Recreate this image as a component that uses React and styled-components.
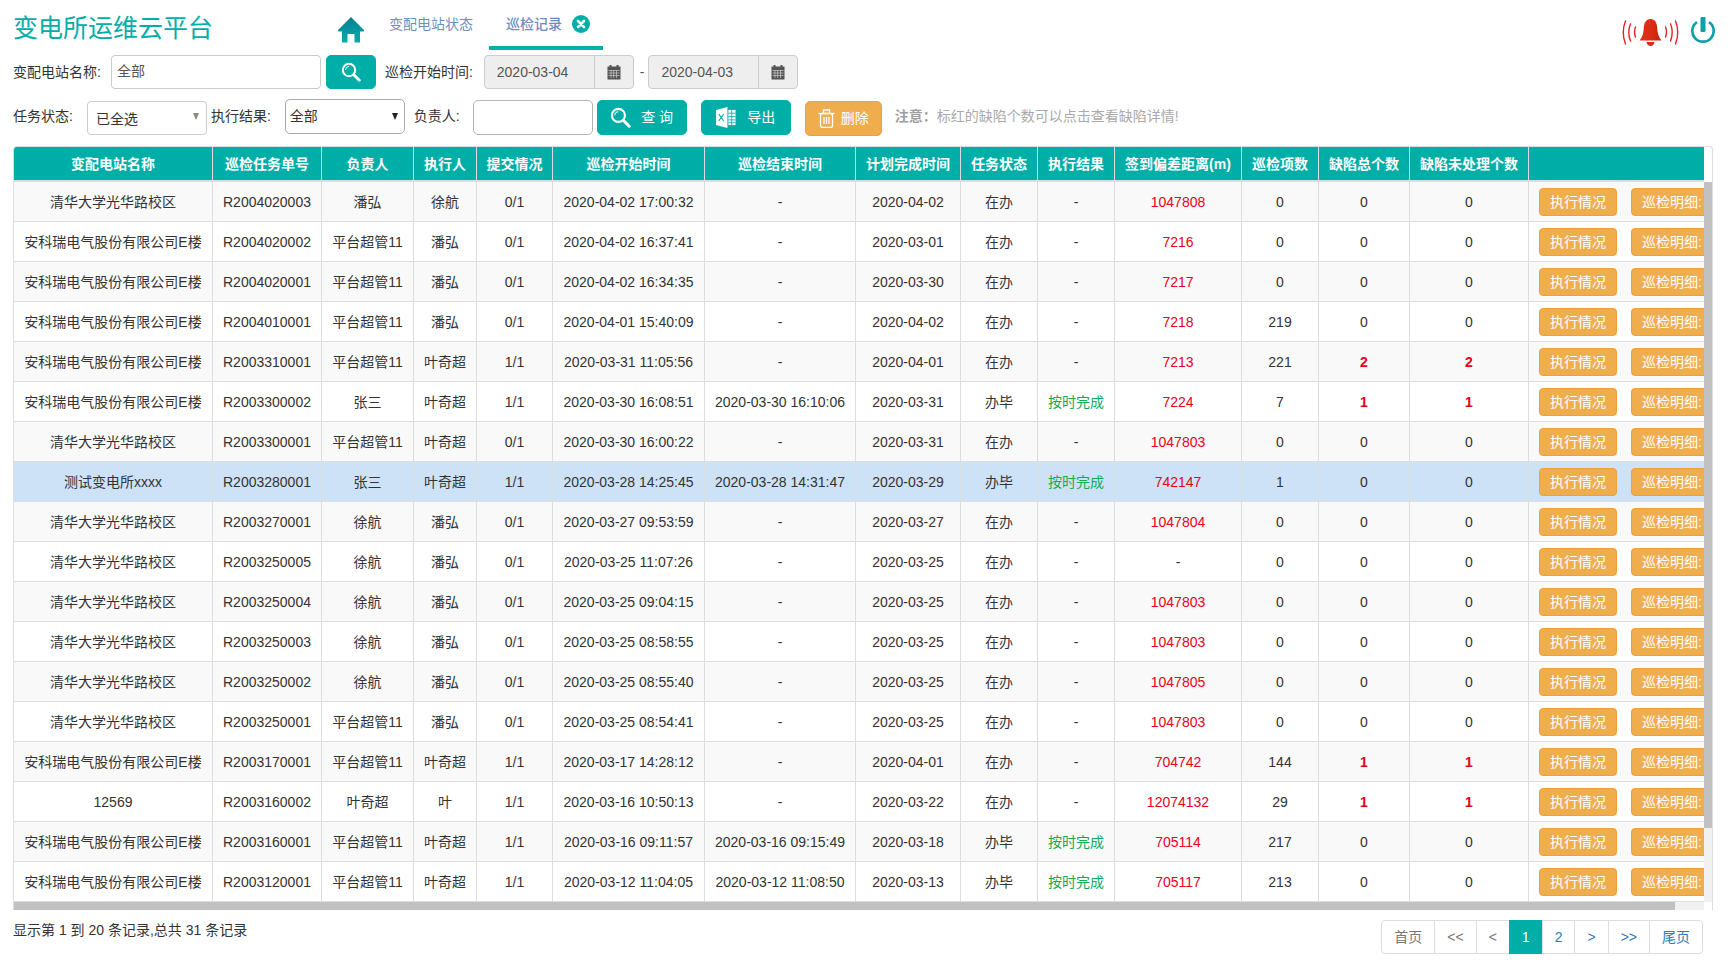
import React from 'react';
import styled, { createGlobalStyle } from 'styled-components';

const TEAL = '#00aea8';
const FONT = '"Liberation Sans", "Noto Sans CJK SC", sans-serif';

const Global = createGlobalStyle`
  html, body { margin: 0; padding: 0; background: #fff; }
  body { font-family: ${FONT}; font-size: 14px; color: #333; overflow: hidden; }
  * { box-sizing: border-box; }
`;

const Page = styled.div`
  width: 1735px;
  height: 968px;
  padding: 0 22px 0 12px;
  display: flex;
  flex-direction: column;
`;
const TopBar = styled.header`
  height: 50px;
  display: flex;
  align-items: flex-start;
  padding-left: 1px;
`;
const Title = styled.h1`
  margin: 13px 0 0;
  width: 200px;
  font-size: 25px;
  line-height: 30px;
  font-weight: 400;
  color: ${TEAL};
`;
const HomeLink = styled.a`
  display: block;
  margin: 16px 0 0 124px;
  width: 28px;
  height: 28px;
`;
const Tab = styled.a`
  height: 50px;
  margin-left: ${p => p.$ml}px;
  width: ${p => p.$w}px;
  padding-left: ${p => p.$pl}px;
  padding-top: 2px;
  display: flex;
  align-items: center;
  gap: 10px;
  line-height: 46px;
  color: #6b8fc2;
  font-weight: ${p => (p.$active ? 500 : 400)};
  border-bottom: 4px solid ${p => (p.$active ? TEAL : 'transparent')};
  white-space: nowrap;
`;
const TopIcons = styled.div`
  margin-left: auto;
  margin-top: 18px;
  margin-right: -2px;
  display: flex;
  gap: 12px;
  align-items: flex-start;
`;
const PowerWrap = styled.span`
  display: block;
  margin-top: -1px;
`;
const FilterRow = styled.div`
  height: ${p => p.$h}px;
  margin-top: ${p => p.$mt}px;
  display: flex;
  align-items: flex-start;
  padding-left: 1px;
`;
const Label = styled.label`
  line-height: 34px;
  margin-left: ${p => p.$ml || 0}px;
  white-space: nowrap;
`;
const TextField = styled.div`
  width: ${p => p.$w}px;
  height: ${p => p.$h || 34}px;
  margin-left: ${p => p.$ml}px;
  margin-top: ${p => p.$mt || 0}px;
  border: 1px solid ${p => (p.$dark ? '#b4b4b4' : '#ccc')};
  border-radius: ${p => p.$r || 4}px;
  padding-left: ${p => p.$pl || 5}px;
  line-height: 30px;
  color: #555;
  background: #fff;
`;
const SelectBox = styled.div`
  position: relative;
  width: 120px;
  height: ${p => p.$h}px;
  margin-left: ${p => p.$ml}px;
  margin-top: ${p => p.$mt}px;
  border: 1px solid ${p => (p.$dark ? '#a9a9a9' : '#ccc')};
  border-radius: ${p => (p.$dark ? 5 : 4)}px;
  padding-left: ${p => p.$pl}px;
  line-height: ${p => p.$lh}px;
  color: #333;
  &::after {
    content: '';
    position: absolute;
    right: ${p => (p.$dark ? 6 : 7)}px;
    top: ${p => (p.$dark ? 13 : 11)}px;
    border-left: 3.5px solid transparent;
    border-right: 3.5px solid transparent;
    border-top: 7px solid ${p => (p.$dark ? '#222' : '#8a8a80')};
  }
`;
const ActionButton = styled.button`
  width: ${p => p.$w}px;
  height: ${p => p.$h || 35}px;
  margin-left: ${p => p.$ml}px;
  margin-top: ${p => p.$mt || 0}px;
  border: 1px solid ${p => (p.$warn ? '#eea236' : TEAL)};
  border-radius: 5px;
  background: ${p => (p.$warn ? '#f0ad4e' : TEAL)};
  color: #fff;
  font: 14px ${FONT};
  display: flex;
  align-items: center;
  justify-content: center;
  gap: ${p => p.$gap || 0}px;
  padding: 0;
  white-space: nowrap;
`;
const ButtonText = styled.span`
  display: block;
  margin-bottom: 3px;
`;
const DateGroup = styled.div`
  width: 150px;
  height: 34px;
  margin-left: ${p => p.$ml}px;
  display: flex;
  background: #eee;
  border: 1px solid #ccc;
  border-radius: 4px;
`;
const DateText = styled.div`
  width: 110px;
  padding-left: 12px;
  line-height: 32px;
  color: #555;
  border-right: 1px solid #ccc;
`;
const DateAddon = styled.div`
  flex: 1;
  display: flex;
  align-items: center;
  justify-content: center;
`;
const Dash = styled.span`
  margin-left: 6px;
  margin-right: -1px;
  line-height: 34px;
  color: #555;
`;
const Note = styled.div`
  margin-left: 13px;
  line-height: 34px;
  color: #aaa;
  b { font-weight: 700; color: #a09c9c; }
`;
const TableShell = styled.div`
  margin: 10px 0 0 1px;
  width: 1700px;
  height: 764px;
  border: 1px solid #ddd;
  border-bottom: 0;
  border-radius: 4px 4px 0 0;
  display: flex;
  flex-direction: column;
  overflow: hidden;
`;
const HeaderClip = styled.div`
  width: 1690px;
  height: 35px;
  overflow: hidden;
  flex: none;
`;
const BodyArea = styled.div`
  display: grid;
  grid-template-columns: 1690px 8px;
  grid-template-rows: 720px 8px;
  flex: none;
`;
const Viewport = styled.div`
  overflow: hidden;
`;
const VTrack = styled.div`
  background: #f1f1f1;
`;
const VThumb = styled.div`
  width: 8px;
  height: 646px;
  background: #c1c1c1;
`;
const HTrack = styled.div`
  background: #f1f1f1;
`;
const HThumb = styled.div`
  width: 1661px;
  height: 8px;
  background: #c1c1c1;
`;
const Grid = styled.table`
  width: 1719px;
  table-layout: fixed;
  border-collapse: separate;
  border-spacing: 0;
`;
const Th = styled.th`
  height: 35px;
  padding: 0 0 1px;
  background: ${TEAL};
  color: #fff;
  font-weight: 700;
  text-align: center;
  border-right: 1px solid #ddd;
  border-bottom: 2px solid #ddd;
  white-space: nowrap;
  &:last-child { border-right: 0; }
`;
const Tr = styled.tr`
  background: ${p => (p.$selected ? '#cde2f7' : p.$odd ? '#f9f9f9' : '#fff')};
`;
const Td = styled.td`
  height: 40px;
  padding: 0 0 ${p => (p.$cjk ? 2 : 0)}px;
  text-align: center;
  color: ${p => p.$color || '#333'};
  font-weight: ${p => (p.$bold ? 700 : 400)};
  border-right: 1px solid #ddd;
  border-bottom: 1px solid #ddd;
  white-space: nowrap;
  &:last-child { border-right: 0; }
`;
const ActionCell = styled.div`
  display: flex;
  gap: 14px;
  padding-left: 10px;
`;
const RowButton = styled.button`
  width: ${p => (p.$wide ? 90 : 78)}px;
  height: 28px;
  flex: none;
  border: 1px solid #eea236;
  border-radius: 4px;
  background: #f0ad4e;
  color: #fff;
  font: 14px ${FONT};
  text-align: ${p => (p.$wide ? 'left' : 'center')};
  padding: 0 0 2px ${p => (p.$wide ? 10 : 0)}px;
`;
const Footer = styled.footer`
  display: flex;
  justify-content: space-between;
  align-items: flex-start;
  padding-top: 10px;
  padding-left: 1px;
`;
const Summary = styled.div`
  line-height: 20px;
`;
const Pager = styled.ul`
  list-style: none;
  display: flex;
  margin: 0 10px 0 0;
  padding: 0;
`;
const PageItem = styled.li`
  height: 34px;
  padding: 0 12px;
  margin-left: -1px;
  line-height: 32px;
  border: 1px solid ${p => (p.$active ? TEAL : '#ddd')};
  background: ${p => (p.$active ? TEAL : '#fff')};
  color: ${p => (p.$active ? '#fff' : p.$muted ? '#777' : '#337ab7')};
  &:first-child { border-radius: 4px 0 0 4px; margin-left: 0; }
  &:last-child { border-radius: 0 4px 4px 0; }
`;

const HomeIcon = () => (
  <svg width="28" height="28" viewBox="0 0 28 28">
    <defs>
      <linearGradient id="homeG" x1="0" y1="0" x2="0" y2="1">
        <stop offset="0" stopColor="#0b7d93" />
        <stop offset="1" stopColor="#00aea8" />
      </linearGradient>
    </defs>
    <path fill="url(#homeG)" d="M14 1 L27 14 Q27.5 15.5 26 15.5 H23 V26.5 H17.5 V18 H10.5 V26.5 H5 V15.5 H2 Q0.5 15.5 1 14 Z" />
  </svg>
);
const CloseDot = () => (
  <svg width="18" height="18" viewBox="0 0 18 18">
    <circle cx="9" cy="9" r="9" fill={TEAL} />
    <path d="M6 6 L12 12 M12 6 L6 12" stroke="#fff" strokeWidth="2.6" strokeLinecap="round" />
  </svg>
);
const Glass = ({ size = 20 }) => (
  <svg width={size} height={size} viewBox="0 0 20 20" fill="none">
    <circle cx="8" cy="8" r="6.2" stroke="#fff" strokeWidth="2" />
    <path d="M4.5 8 A3.5 3.5 0 0 1 8 4.5" stroke="#fff" strokeWidth="1" />
    <path d="M12.6 12.6 L18.3 18.3" stroke="#fff" strokeWidth="2.8" strokeLinecap="round" />
  </svg>
);
const Calendar = () => (
  <svg width="14" height="15" viewBox="0 0 14 15">
    <rect x="0.5" y="1.5" width="13" height="13" fill="#555" />
    <rect x="2.5" y="0" width="2" height="3" fill="#555" />
    <rect x="9.5" y="0" width="2" height="3" fill="#555" />
    <path d="M1.5 5.5 H12.5 M1.5 8 H12.5 M1.5 10.5 H12.5 M4 5 V13 M6.7 5 V13 M9.5 5 V13" stroke="#ccc" strokeWidth="0.7" fill="none" />
  </svg>
);
const ExcelIcon = () => (
  <svg width="20" height="21" viewBox="0 0 21 22">
    <path fill="#fff" d="M0 3 L12 0 V22 L0 19 Z" />
    <rect x="13" y="3" width="7.5" height="16" fill="#fff" />
    <path d="M13 6.5 H20.5 M13 10 H20.5 M13 13.5 H20.5 M13 16.5 H20.5 M16.5 3 V19" stroke={TEAL} strokeWidth="0.9" />
    <path d="M3 7.5 L8 14.5 M8 7.5 L3 14.5" stroke={TEAL} strokeWidth="1.1" />
  </svg>
);
const TrashIcon = () => (
  <svg width="17" height="19" viewBox="0 0 17 19" fill="none" stroke="#fff" strokeWidth="1.3">
    <path d="M0.5 4.5 H16.5" />
    <path d="M5.5 4 V1 H11.5 V4" />
    <rect x="2.5" y="4.5" width="12" height="14" rx="2" />
    <path d="M6 8 V15 M8.5 8 V15 M11 8 V15" />
  </svg>
);
const BellIcon = () => (
  <svg width="57" height="28" viewBox="0 0 57 28" fill="none">
    <defs>
      <linearGradient id="bellG" x1="0" y1="0" x2="1" y2="0">
        <stop offset="0" stopColor="#e0311a" />
        <stop offset="0.6" stopColor="#d82c14" />
        <stop offset="1" stopColor="#b8260f" />
      </linearGradient>
    </defs>
    <path fill="url(#bellG)" d="M28.5 1 C24 1 22 5 21.8 10 C21.5 15 20.5 19 17.5 22.5 H39.5 C36.5 19 35.5 15 35.2 10 C35 5 33 1 28.5 1 Z" />
    <path fill="#d82c14" d="M24.5 24 H32.5 C32 27 30 28 28.5 28 C27 28 25 27 24.5 24 Z" />
    <g stroke="#e8202a" strokeWidth="1.4" strokeLinecap="round">
      <path d="M13.5 9 Q11.5 14 13.5 19" />
      <path d="M8.5 6 Q5 14 8.5 23" />
      <path d="M3.5 3 Q-1 14 3.5 26" />
      <path d="M43.5 9 Q45.5 14 43.5 19" />
      <path d="M48.5 6 Q52 14 48.5 23" />
      <path d="M53.5 3 Q58 14 53.5 26" />
    </g>
  </svg>
);
const PowerIcon = () => (
  <svg width="24" height="26" viewBox="0 0 24 26" fill="none">
    <path d="M6 5.1 A10.7 10.7 0 1 0 18 5.1" stroke="#0e9fa8" strokeWidth="2.6" />
    <rect x="9.5" y="0" width="5" height="15" rx="1.2" fill="#0e9fa8" />
  </svg>
);

const widths = [199, 109, 92, 63, 76, 152, 151, 105, 77, 77, 127, 77, 91, 119, 204];
const headers = ['变配电站名称', '巡检任务单号', '负责人', '执行人', '提交情况', '巡检开始时间', '巡检结束时间', '计划完成时间', '任务状态', '执行结果', '签到偏差距离(m)', '巡检项数', '缺陷总个数', '缺陷未处理个数', ''];

const QH = '清华大学光华路校区';
const AK = '安科瑞电气股份有限公司E楼';
const PT = '平台超管11';
const rows = [
  [QH, 'R2004020003', '潘弘', '徐航', '0/1', '2020-04-02 17:00:32', '-', '2020-04-02', '在办', '-', '1047808', 0, 0, 0],
  [AK, 'R2004020002', PT, '潘弘', '0/1', '2020-04-02 16:37:41', '-', '2020-03-01', '在办', '-', '7216', 0, 0, 0],
  [AK, 'R2004020001', PT, '潘弘', '0/1', '2020-04-02 16:34:35', '-', '2020-03-30', '在办', '-', '7217', 0, 0, 0],
  [AK, 'R2004010001', PT, '潘弘', '0/1', '2020-04-01 15:40:09', '-', '2020-04-02', '在办', '-', '7218', 219, 0, 0],
  [AK, 'R2003310001', PT, '叶奇超', '1/1', '2020-03-31 11:05:56', '-', '2020-04-01', '在办', '-', '7213', 221, 2, 2],
  [AK, 'R2003300002', '张三', '叶奇超', '1/1', '2020-03-30 16:08:51', '2020-03-30 16:10:06', '2020-03-31', '办毕', '按时完成', '7224', 7, 1, 1],
  [QH, 'R2003300001', PT, '叶奇超', '0/1', '2020-03-30 16:00:22', '-', '2020-03-31', '在办', '-', '1047803', 0, 0, 0],
  ['测试变电所xxxx', 'R2003280001', '张三', '叶奇超', '1/1', '2020-03-28 14:25:45', '2020-03-28 14:31:47', '2020-03-29', '办毕', '按时完成', '742147', 1, 0, 0],
  [QH, 'R2003270001', '徐航', '潘弘', '0/1', '2020-03-27 09:53:59', '-', '2020-03-27', '在办', '-', '1047804', 0, 0, 0],
  [QH, 'R2003250005', '徐航', '潘弘', '0/1', '2020-03-25 11:07:26', '-', '2020-03-25', '在办', '-', '-', 0, 0, 0],
  [QH, 'R2003250004', '徐航', '潘弘', '0/1', '2020-03-25 09:04:15', '-', '2020-03-25', '在办', '-', '1047803', 0, 0, 0],
  [QH, 'R2003250003', '徐航', '潘弘', '0/1', '2020-03-25 08:58:55', '-', '2020-03-25', '在办', '-', '1047803', 0, 0, 0],
  [QH, 'R2003250002', '徐航', '潘弘', '0/1', '2020-03-25 08:55:40', '-', '2020-03-25', '在办', '-', '1047805', 0, 0, 0],
  [QH, 'R2003250001', PT, '潘弘', '0/1', '2020-03-25 08:54:41', '-', '2020-03-25', '在办', '-', '1047803', 0, 0, 0],
  [AK, 'R2003170001', PT, '叶奇超', '1/1', '2020-03-17 14:28:12', '-', '2020-04-01', '在办', '-', '704742', 144, 1, 1],
  ['12569', 'R2003160002', '叶奇超', '叶', '1/1', '2020-03-16 10:50:13', '-', '2020-03-22', '在办', '-', '12074132', 29, 1, 1],
  [AK, 'R2003160001', PT, '叶奇超', '1/1', '2020-03-16 09:11:57', '2020-03-16 09:15:49', '2020-03-18', '办毕', '按时完成', '705114', 217, 0, 0],
  [AK, 'R2003120001', PT, '叶奇超', '1/1', '2020-03-12 11:04:05', '2020-03-12 11:08:50', '2020-03-13', '办毕', '按时完成', '705117', 213, 0, 0],
];

const Cols = () => (
  <colgroup>
    {widths.map((w, i) => <col key={i} width={w} />)}
  </colgroup>
);

const RED = '#e8001c';
const GREEN = '#10ab54';
const hasCjk = v => typeof v === 'string' && /[\u4e00-\u9fff]/.test(v);

const cellStyle = (i, v) => {
  const base = { $cjk: hasCjk(v) };
  if (i === 9 && v !== '-') return { ...base, $color: GREEN };
  if (i === 10 && v !== '-') return { ...base, $color: RED };
  if ((i === 12 || i === 13) && v > 0) return { ...base, $color: RED, $bold: true };
  return base;
};

export default function App() {
  return (
    <Page>
      <Global />
      <TopBar>
        <Title>变电所运维云平台</Title>
        <HomeLink><HomeIcon /></HomeLink>
        <Tab $ml={22} $w={88} $pl={2}>变配电站状态</Tab>
        <Tab $active $ml={14} $w={114} $pl={17}>巡检记录<CloseDot /></Tab>
        <TopIcons>
          <BellIcon />
          <PowerWrap><PowerIcon /></PowerWrap>
        </TopIcons>
      </TopBar>
      <FilterRow $h={34} $mt={5}>
        <Label>变配电站名称:</Label>
        <TextField $w={210} $ml={10}>全部</TextField>
        <ActionButton $w={50} $h={34} $ml={5}><Glass /></ActionButton>
        <Label $ml={9}>巡检开始时间:</Label>
        <DateGroup $ml={11}>
          <DateText>2020-03-04</DateText>
          <DateAddon><Calendar /></DateAddon>
        </DateGroup>
        <Dash>-</Dash>
        <DateGroup $ml={5}>
          <DateText>2020-04-03</DateText>
          <DateAddon><Calendar /></DateAddon>
        </DateGroup>
      </FilterRow>
      <FilterRow $h={37} $mt={10}>
        <Label>任务状态:</Label>
        <SelectBox $ml={14} $mt={2} $h={34} $pl={8} $lh={34}>已全选</SelectBox>
        <Label $ml={4}>执行结果:</Label>
        <SelectBox $dark $ml={14} $mt={0} $h={35} $pl={4} $lh={32}>全部</SelectBox>
        <Label $ml={9}>负责人:</Label>
        <TextField $dark $r={5} $w={120} $h={35} $ml={13} $mt={1} />
        <ActionButton $w={90} $ml={4} $mt={1} $gap={10}><Glass size={21} /><ButtonText>查 询</ButtonText></ActionButton>
        <ActionButton $w={90} $ml={14} $mt={1} $gap={11}><ExcelIcon /><ButtonText>导出</ButtonText></ActionButton>
        <ActionButton $warn $w={77} $ml={14} $mt={2} $gap={6}><TrashIcon /><ButtonText>删除</ButtonText></ActionButton>
        <Note><b>{'注意\uFF1A'}</b>标红的缺陷个数可以点击查看缺陷详情!</Note>
      </FilterRow>
      <TableShell>
        <HeaderClip>
          <Grid>
            <Cols />
            <thead>
              <tr>{headers.map((h, i) => <Th key={i}>{h}</Th>)}</tr>
            </thead>
          </Grid>
        </HeaderClip>
        <BodyArea>
          <Viewport>
            <Grid>
              <Cols />
              <tbody>
                {rows.map((r, ri) => (
                  <Tr key={ri} $odd={ri % 2 === 0} $selected={ri === 7}>
                    {r.map((v, i) => <Td key={i} {...cellStyle(i, v)}>{v}</Td>)}
                    <Td>
                      <ActionCell>
                        <RowButton>执行情况</RowButton>
                        <RowButton $wide>巡检明细:</RowButton>
                      </ActionCell>
                    </Td>
                  </Tr>
                ))}
              </tbody>
            </Grid>
          </Viewport>
          <VTrack><VThumb /></VTrack>
          <HTrack><HThumb /></HTrack>
        </BodyArea>
      </TableShell>
      <Footer>
        <Summary>显示第 1 到 20 条记录,总共 31 条记录</Summary>
        <Pager>
          <PageItem $muted>首页</PageItem>
          <PageItem $muted>&lt;&lt;</PageItem>
          <PageItem $muted>&lt;</PageItem>
          <PageItem $active>1</PageItem>
          <PageItem>2</PageItem>
          <PageItem>&gt;</PageItem>
          <PageItem>&gt;&gt;</PageItem>
          <PageItem>尾页</PageItem>
        </Pager>
      </Footer>
    </Page>
  );
}
